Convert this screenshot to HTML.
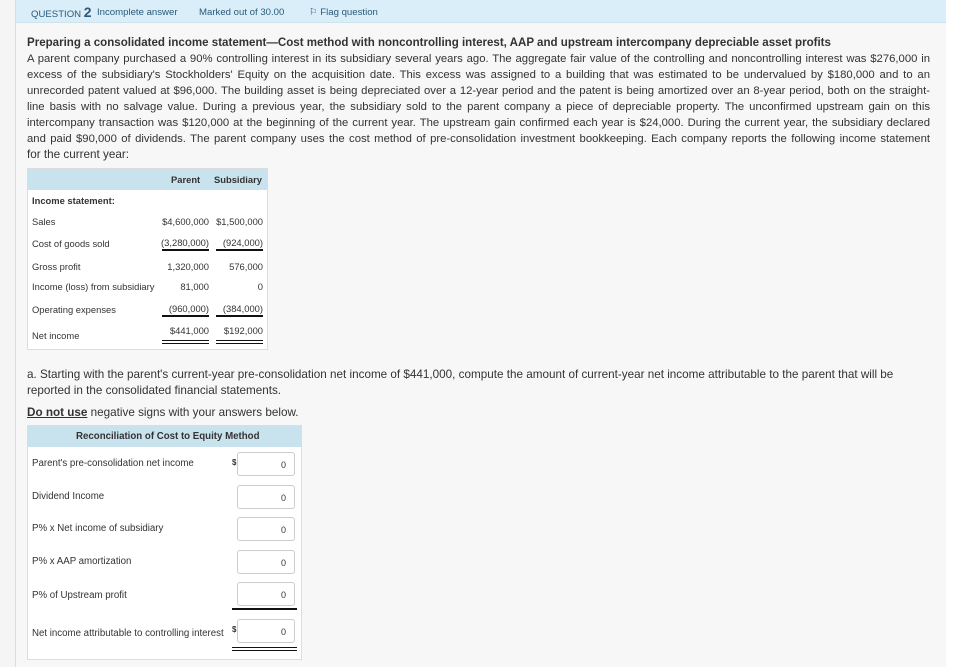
<!DOCTYPE html>
<html><head><meta charset="utf-8"><style>
*{margin:0;padding:0;box-sizing:border-box}
body{width:961px;height:667px;overflow:hidden;background:#fff;font-family:"Liberation Sans",sans-serif;color:#333;position:relative}
#left{position:absolute;left:0;top:0;width:16px;height:667px;background:#f5f5f5;border-right:1px solid #ddd}
#panel{position:absolute;left:16px;top:0;width:930px;height:667px;background:#f7f7f7}
#hdr{position:absolute;left:16px;top:0;width:930px;height:23px;background:#d9eef8;border-bottom:1px solid #cfe3ec;font-size:9.6px;color:#2a5a7a}
#hdr span{position:absolute;top:7px;line-height:11px}
.a{position:absolute;white-space:nowrap}
.p{position:absolute;left:27px;font-size:11.7px;line-height:16px;white-space:nowrap}
.j{width:903px;text-align:justify;text-align-last:justify;font-size:11.3px}
.t{position:absolute;font-size:9.4px;white-space:nowrap;color:#333}
.u{position:absolute;font-size:9.7px;white-space:nowrap;color:#333}
.r{text-align:right}
.box{position:absolute;width:58px;height:24px;background:#fff;border:1px solid #ccc;border-radius:3px;font-size:9px;text-align:right;padding:7px 8px 0 0}
.ln{position:absolute;height:2px;background:#111}
</style></head><body>
<div id="left"></div>
<div id="panel"></div>
<div id="hdr">
<span style="left:15px;top:5px!important;line-height:14px">QUESTION <b style="font-size:14px">2</b></span>
<span style="left:81px">Incomplete answer</span>
<span style="left:183px">Marked out of 30.00</span>
<span style="left:293px">⚐ Flag question</span>
</div>
<div class="p" style="top:35px;font-weight:bold;font-size:11.55px">Preparing a consolidated income statement—Cost method with noncontrolling interest, AAP and upstream intercompany depreciable asset profits</div>
<div class="p j" style="top:51px">A parent company purchased a 90% controlling interest in its subsidiary several years ago. The aggregate fair value of the controlling and noncontrolling interest was $276,000 in</div>
<div class="p j" style="top:67px">excess of the subsidiary's Stockholders' Equity on the acquisition date. This excess was assigned to a building that was estimated to be undervalued by $180,000 and to an</div>
<div class="p j" style="top:83px">unrecorded patent valued at $96,000. The building asset is being depreciated over a 12-year period and the patent is being amortized over an 8-year period, both on the straight-</div>
<div class="p j" style="top:99px">line basis with no salvage value. During a previous year, the subsidiary sold to the parent company a piece of depreciable property. The unconfirmed upstream gain on this</div>
<div class="p j" style="top:115px">intercompany transaction was $120,000 at the beginning of the current year. The upstream gain confirmed each year is $24,000. During the current year, the subsidiary declared</div>
<div class="p j" style="top:131px">and paid $90,000 of dividends. The parent company uses the cost method of pre-consolidation investment bookkeeping. Each company reports the following income statement</div>
<div class="p" style="top:147px">for the current year:</div>

<div class="a" style="left:27px;top:168px;width:241px;height:182px;background:#fff;border:1px solid #ddd"></div>
<div class="a" style="left:28px;top:169px;width:239px;height:21px;background:#c9e3ee"></div>
<div class="t" style="left:171px;top:174px;font-weight:bold">Parent</div>
<div class="t" style="left:214px;top:174px;font-weight:bold">Subsidiary</div>
<div class="t" style="left:32px;top:195px;font-weight:bold">Income statement:</div>
<div class="t" style="left:32px;top:216px">Sales</div>
<div class="t" style="left:32px;top:238px">Cost of goods sold</div>
<div class="t" style="left:32px;top:261px">Gross profit</div>
<div class="t" style="left:32px;top:281px">Income (loss) from subsidiary</div>
<div class="t" style="left:32px;top:304px">Operating expenses</div>
<div class="t" style="left:32px;top:330px">Net income</div>
<div class="t r" style="right:752px;top:216px">$4,600,000</div><div class="t r" style="right:698px;top:216px">$1,500,000</div>
<div class="t r" style="right:752px;top:237px">(3,280,000)</div><div class="t r" style="right:698px;top:237px">(924,000)</div>
<div class="t r" style="right:752px;top:261px">1,320,000</div><div class="t r" style="right:698px;top:261px">576,000</div>
<div class="t r" style="right:752px;top:281px">81,000</div><div class="t r" style="right:698px;top:281px">0</div>
<div class="t r" style="right:752px;top:303px">(960,000)</div><div class="t r" style="right:698px;top:303px">(384,000)</div>
<div class="t r" style="right:752px;top:325px">$441,000</div><div class="t r" style="right:698px;top:325px">$192,000</div>
<div class="ln" style="left:162px;top:249px;width:47px"></div><div class="ln" style="left:216px;top:249px;width:47px"></div>
<div class="ln" style="left:162px;top:315px;width:47px"></div><div class="ln" style="left:216px;top:315px;width:47px"></div>
<div class="ln" style="left:162px;top:340px;width:47px;height:1px"></div><div class="ln" style="left:216px;top:340px;width:47px;height:1px"></div>
<div class="ln" style="left:162px;top:343px;width:47px;height:1px"></div><div class="ln" style="left:216px;top:343px;width:47px;height:1px"></div>

<div class="p" style="top:367px">a. Starting with the parent's current-year pre-consolidation net income of $441,000, compute the amount of current-year net income attributable to the parent that will be</div>
<div class="p" style="top:383px">reported in the consolidated financial statements.</div>
<div class="p" style="top:405px"><b style="text-decoration:underline">Do not use</b> negative signs with your answers below.</div>

<div class="a" style="left:27px;top:425px;width:275px;height:235px;background:#fff;border:1px solid #ddd"></div>
<div class="a" style="left:28px;top:426px;width:273px;height:21px;background:#c9e3ee"></div>
<div class="u" style="left:76px;top:431px;font-weight:bold">Reconciliation of Cost to Equity Method</div>
<div class="u" style="left:32px;top:458px">Parent's pre-consolidation net income</div>
<div class="u" style="left:32px;top:491px">Dividend Income</div>
<div class="u" style="left:32px;top:523px">P% x Net income of subsidiary</div>
<div class="u" style="left:32px;top:556px">P% x AAP amortization</div>
<div class="u" style="left:32px;top:590px">P% of Upstream profit</div>
<div class="u" style="left:32px;top:628px">Net income attributable to controlling interest</div>
<div class="t" style="left:232px;top:458px;font-size:8px;font-weight:bold">$</div>
<div class="t" style="left:232px;top:625px;font-size:8px;font-weight:bold">$</div>
<div class="box" style="left:237px;top:452px">0</div>
<div class="box" style="left:237px;top:485px">0</div>
<div class="box" style="left:237px;top:517px">0</div>
<div class="box" style="left:237px;top:550px">0</div>
<div class="box" style="left:237px;top:582px">0</div>
<div class="ln" style="left:232px;top:608px;width:65px"></div>
<div class="box" style="left:237px;top:619px">0</div>
<div class="ln" style="left:232px;top:647px;width:65px;height:1px"></div>
<div class="ln" style="left:232px;top:650px;width:65px;height:1px"></div>
</body></html>
